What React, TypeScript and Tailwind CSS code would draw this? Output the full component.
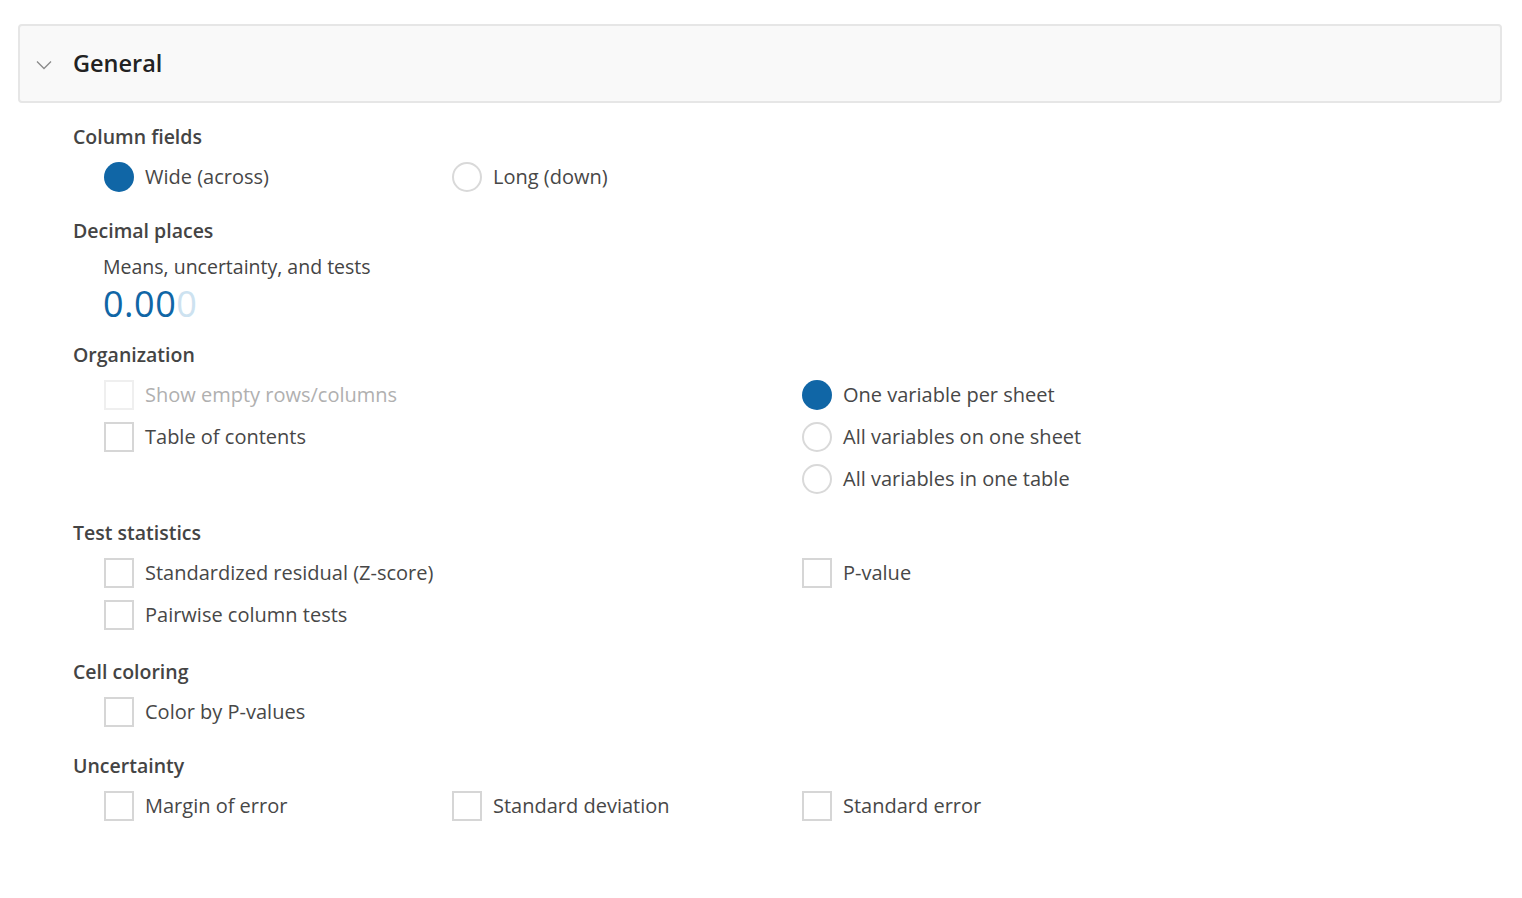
import React from 'react';

type Opt = { label: string; kind: 'radio' | 'check'; checked?: boolean; disabled?: boolean };

function Control({ opt }: { opt: Opt }) {
  const box =
    opt.kind === 'radio' ? (
      opt.checked ? (
        <span className="w-[30px] h-[30px] rounded-full bg-[#1066a6] shrink-0" />
      ) : (
        <span className="w-[30px] h-[30px] rounded-full border-2 border-[#d9d9d9] bg-white shrink-0" />
      )
    ) : (
      <span
        className={`w-[30px] h-[30px] border-2 bg-white shrink-0 ${opt.disabled ? 'border-[#efefef]' : 'border-[#d6d6d6]'}`}
      />
    );
  return (
    <div className="flex items-center h-[30px] gap-[11px]">
      {box}
      <span className={`text-[20px] leading-[24px] ${opt.disabled ? 'text-[#b0b0b0]' : 'text-[#474747]'}`}>{opt.label}</span>
    </div>
  );
}

// columns: each cell is a stack of options
function Section({ title, cols, className = '', children }: { title: string; cols?: (Opt[] | null)[]; className?: string; children?: React.ReactNode }) {
  return (
    <div className={`pl-[55px] ${className}`}>
      <h3 className="text-[19.5px] leading-[24px] font-semibold text-[#444]">{title}</h3>
      {cols && (
        <div className="grid grid-cols-[348px_350px_350px] mt-[13px] pl-[31px]">
          {cols.map((c, i) => (
            <div key={i} className="flex flex-col gap-[12px]">
              {c?.map(o => <Control key={o.label} opt={o} />)}
            </div>
          ))}
        </div>
      )}
      {children}
    </div>
  );
}

export default function App() {
  return (
    <div className="min-h-screen bg-white pt-[24px] pl-[18px] pr-[20px]" style={{ fontFamily: '"Open Sans", Lato, sans-serif' }}>
      <div className="h-[79px] flex items-center bg-[#f9f9f9] border-2 border-[#e6e6e6] rounded-[4px]">
        <svg width="16" height="10" viewBox="0 0 16 10" className="ml-[16px] mt-[2px]" fill="none" stroke="#8a8a8a" strokeWidth="1.3">
          <path d="M1 1.5 L8 8.5 L15 1.5" />
        </svg>
        <h2 className="ml-[21px] text-[23.5px] font-semibold text-[#222]">General</h2>
      </div>

      <div className="flex flex-col gap-[27px] pt-[22px]">
        <Section
          title="Column fields"
          cols={[
            [{ label: 'Wide (across)', kind: 'radio', checked: true }],
            [{ label: 'Long (down)', kind: 'radio' }],
          ]}
        />

        <Section title="Decimal places">
          <div className="pl-[30px] mt-[12px]">
            <div className="text-[19.5px] leading-[24px] text-[#444]">Means, uncertainty, and tests</div>
            <div className="text-[36px] leading-[34px] tracking-[0.5px] mt-[8px] mb-[-5px] text-[#1066a6]">
              0.00<span className="text-[#cde2f0]">0</span>
            </div>
          </div>
        </Section>

        <Section
          title="Organization"
          cols={[
            [
              { label: 'Show empty rows/columns', kind: 'check', disabled: true },
              { label: 'Table of contents', kind: 'check' },
            ],
            null,
            [
              { label: 'One variable per sheet', kind: 'radio', checked: true },
              { label: 'All variables on one sheet', kind: 'radio' },
              { label: 'All variables in one table', kind: 'radio' },
            ],
          ]}
        />

        <Section
          title="Test statistics"
          cols={[
            [
              { label: 'Standardized residual (Z-score)', kind: 'check' },
              { label: 'Pairwise column tests', kind: 'check' },
            ],
            null,
            [{ label: 'P-value', kind: 'check' }],
          ]}
        />

        <Section title="Cell coloring" className="mt-[3px]" cols={[[{ label: 'Color by P-values', kind: 'check' }]]} />

        <Section
          title="Uncertainty"
          cols={[
            [{ label: 'Margin of error', kind: 'check' }],
            [{ label: 'Standard deviation', kind: 'check' }],
            [{ label: 'Standard error', kind: 'check' }],
          ]}
        />
      </div>
    </div>
  );
}
